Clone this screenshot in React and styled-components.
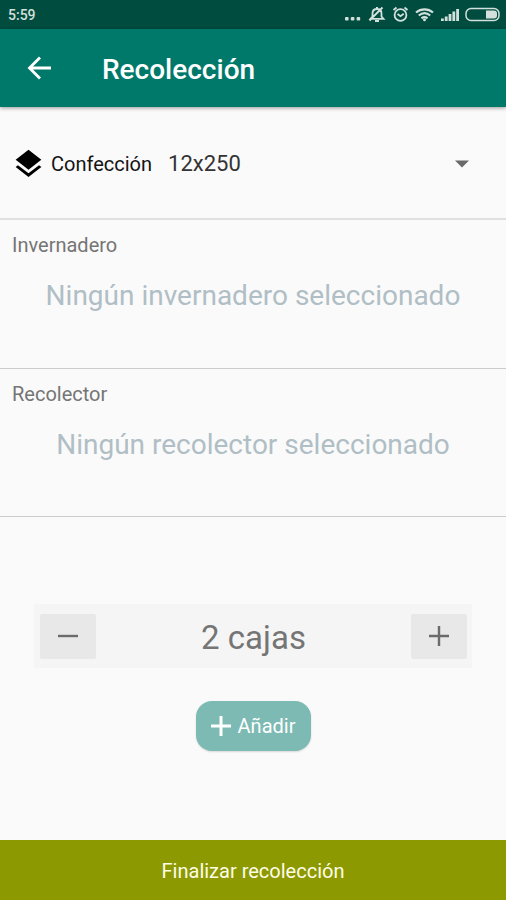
import React, { useState } from "react";
import styled, { createGlobalStyle } from "styled-components";

const GlobalStyle = createGlobalStyle`
  * { box-sizing: border-box; }
  body { margin: 0; background: #fafafa; }
  button, select { font: inherit; border: 0; padding: 0; cursor: pointer; }
`;

const Screen = styled.div`
  min-height: 100vh;
  display: flex;
  flex-direction: column;
  background: #fafafa;
  color: #757575;
  font-family: Roboto, "Noto Sans", sans-serif;
`;

const StatusBar = styled.div`
  display: flex;
  align-items: center;
  justify-content: space-between;
  height: 29px;
  padding: 0 6px 0 8px;
  background: #004d40;
  color: #d3e0dc;
  font-size: 14px;
  font-weight: 500;
`;

const StatusIcons = styled.div`
  display: flex;
  align-items: center;
  gap: 6px;
  svg { display: block; }
`;

const AppBar = styled.header`
  display: flex;
  align-items: center;
  gap: 48px;
  height: 78px;
  padding: 0 24px;
  background: #00796b;
  color: #fff;
  box-shadow: 0 1px 4px rgba(0, 0, 0, 0.4);
`;

const BackButton = styled.button`
  display: flex;
  align-items: center;
  justify-content: center;
  width: 30px;
  height: 48px;
  background: none;
  color: inherit;
`;

const Title = styled.h1`
  margin: 0;
  padding-top: 3px;
  font-size: 28px;
  line-height: 32px;
  font-weight: 500;
`;

const PackRow = styled.div`
  display: flex;
  align-items: center;
  height: 113px;
  padding: 2px 32px 0 14px;
  border-bottom: 2px solid #e0e0e0;
  color: #141414;
`;

const PackLabel = styled.label`
  display: flex;
  align-items: center;
  gap: 8px;
  font-size: 20px;
  line-height: 24px;
`;

const SelectBox = styled.div`
  flex: 1;
  display: grid;
  align-items: center;
  margin-left: 16px;
  > * { grid-area: 1 / 1; }
  > svg { justify-self: end; pointer-events: none; color: #696969; }
`;

const Select = styled.select`
  appearance: none;
  width: 100%;
  height: 48px;
  background: transparent;
  color: #333;
  && { font-size: 22px; }
`;

const Section = styled.section`
  height: ${(p) => p.$height};
  padding: 13px 12px 0;
  border-bottom: 1px solid #cbcbcb;
`;

const SectionTitle = styled.h2`
  margin: 0;
  font-size: 20px;
  line-height: 24px;
  font-weight: 400;
`;

const EmptyText = styled.p`
  margin: 22px 0 0;
  font-size: 28px;
  line-height: 34px;
  text-align: center;
  color: #b0bec5;
`;

const Actions = styled.main`
  flex: 1;
  display: flex;
  flex-direction: column;
  align-items: center;
  gap: 33px;
  padding: 87px 34px 32px;
`;

const Stepper = styled.div`
  display: flex;
  align-items: center;
  justify-content: space-between;
  width: 100%;
  height: 64px;
  padding: 0 5px 0 6px;
  background: #f5f5f5;
`;

const StepButton = styled.button`
  display: flex;
  align-items: center;
  justify-content: center;
  width: 56px;
  height: 45px;
  border-radius: 2px;
  background: #e8e8e8;
  color: #6b6b6b;
`;

const Count = styled.output`
  padding-top: 3px;
  font-size: 33px;
  line-height: 40px;
`;

const AddButton = styled.button`
  display: flex;
  align-items: center;
  justify-content: center;
  gap: 7px;
  width: 115px;
  height: 50px;
  border-radius: 16px;
  background: #7cbab3;
  color: #fff;
  box-shadow: 0 1px 2px rgba(0, 0, 0, 0.14);
  && { font-size: 20px; }
`;

const FinishButton = styled.button`
  height: 60px;
  background: #8c9900;
  color: #fffde8;
  && { font-size: 20px; padding-top: 2px; }
`;

const Plus = ({ size, stroke }) => (
  <svg width={size} height={size} viewBox="0 0 20 20" fill="none" stroke="currentColor" strokeWidth={stroke} aria-hidden="true">
    <path d="M10 0v20M0 10h20" />
  </svg>
);

const Minus = () => (
  <svg width="20" height="20" viewBox="0 0 20 20" fill="none" stroke="currentColor" strokeWidth="2.4" aria-hidden="true">
    <path d="M0 10h20" />
  </svg>
);

const StatusGlyphs = () => (
  <StatusIcons aria-hidden="true">
    <svg width="17" height="16" viewBox="0 0 17 16" fill="currentColor">
      <rect x="0" y="10" width="3.6" height="3.4" rx="1" />
      <rect x="5.8" y="10" width="3.6" height="3.4" rx="1" />
      <rect x="11.6" y="10" width="3.6" height="3.4" rx="1" />
    </svg>
    <svg width="18" height="18" viewBox="0 0 18 18" fill="none" stroke="currentColor" strokeWidth="1.8">
      <path d="M4.500 10.500V7.500C4.500 4.500 6.500 3 9 3s4.500 1.500 4.500 4.500v3l2 2.300H2.500zM7 15h4M1.500 14.500 14.500 1.500M8 1.800h2" />
    </svg>
    <svg width="17" height="18" viewBox="0 0 17 18" fill="none" stroke="currentColor" strokeWidth="1.8">
      <circle cx="8.500" cy="9" r="5.900" />
      <path d="m5.500 8 3 2.200 3.200-2.400M1.500 4 4.500 1.500M15.500 4l-3-2.500" />
    </svg>
    <svg width="19" height="16" viewBox="0 0 19 16" fill="none" stroke="currentColor" strokeWidth="2.200">
      <path d="M1 5.500c5-4.300 12-4.300 17 0M3.800 8.500c3.500-3 7.900-3 11.400 0M6.500 11.300c2-1.500 4-1.500 6 0" />
      <circle cx="9.500" cy="12.800" r="1.500" fill="currentColor" stroke="none" />
    </svg>
    <svg width="19" height="16" viewBox="0 0 19 16" fill="currentColor">
      <path d="M1 11.500h2.800V14H1zM4.800 9.500h2.800V14H4.800zM8.600 7h2.800v7H8.600zM12.400 4.500h2.800V14h-2.800zM16.200 2H19v12h-2.800z" />
    </svg>
    <svg width="35" height="15" viewBox="0 0 35 15" fill="none" stroke="currentColor" strokeWidth="1.500">
      <rect x="1" y="1.500" width="33" height="12" rx="5" />
      <path d="M21 3.500h8a3 3 0 0 1 3 3v2a3 3 0 0 1-3 3h-8z" fill="currentColor" stroke="none" />
    </svg>
  </StatusIcons>
);

export default function App() {
  const [count, setCount] = useState(2);

  return (
    <Screen>
      <GlobalStyle />
      <StatusBar>
        <span>5:59</span>
        <StatusGlyphs />
      </StatusBar>
      <AppBar>
        <BackButton aria-label="Atrás">
          <svg width="24" height="24" viewBox="0 0 24 24" fill="none" stroke="currentColor" strokeWidth="2.800" aria-hidden="true">
            <path d="M24 12H2.500M13 1.500 2.500 12 13 22.500" />
          </svg>
        </BackButton>
        <Title>Recolección</Title>
      </AppBar>
      <PackRow>
        <PackLabel htmlFor="pack">
          <svg width="29" height="30" viewBox="2 1.500 20 21" fill="#000" aria-hidden="true">
            <path d="m11.990 18.540-7.370-5.730L3 14.070l9 7 9-7-1.630-1.270zM12 16l7.360-5.730L21 9l-9-7-9 7 1.630 1.270z" />
          </svg>
          Confección
        </PackLabel>
        <SelectBox>
          <Select id="pack" defaultValue="12x250">
            <option>12x250</option>
          </Select>
          <svg width="24" height="14" viewBox="0 0 24 14" fill="currentColor" aria-hidden="true">
            <path d="M5 3.500h14L12 10.500z" />
          </svg>
        </SelectBox>
      </PackRow>
      <Section $height="149px">
        <SectionTitle>Invernadero</SectionTitle>
        <EmptyText>Ningún invernadero seleccionado</EmptyText>
      </Section>
      <Section $height="148px">
        <SectionTitle>Recolector</SectionTitle>
        <EmptyText>Ningún recolector seleccionado</EmptyText>
      </Section>
      <Actions>
        <Stepper>
          <StepButton aria-label="Quitar una caja" onClick={() => setCount(Math.max(0, count - 1))}>
            <Minus />
          </StepButton>
          <Count>{count} cajas</Count>
          <StepButton aria-label="Sumar una caja" onClick={() => setCount(count + 1)}>
            <Plus size={20} stroke={2.4} />
          </StepButton>
        </Stepper>
        <AddButton>
          <Plus size={20} stroke={3} />
          Añadir
        </AddButton>
      </Actions>
      <FinishButton>Finalizar recolección</FinishButton>
    </Screen>
  );
}
